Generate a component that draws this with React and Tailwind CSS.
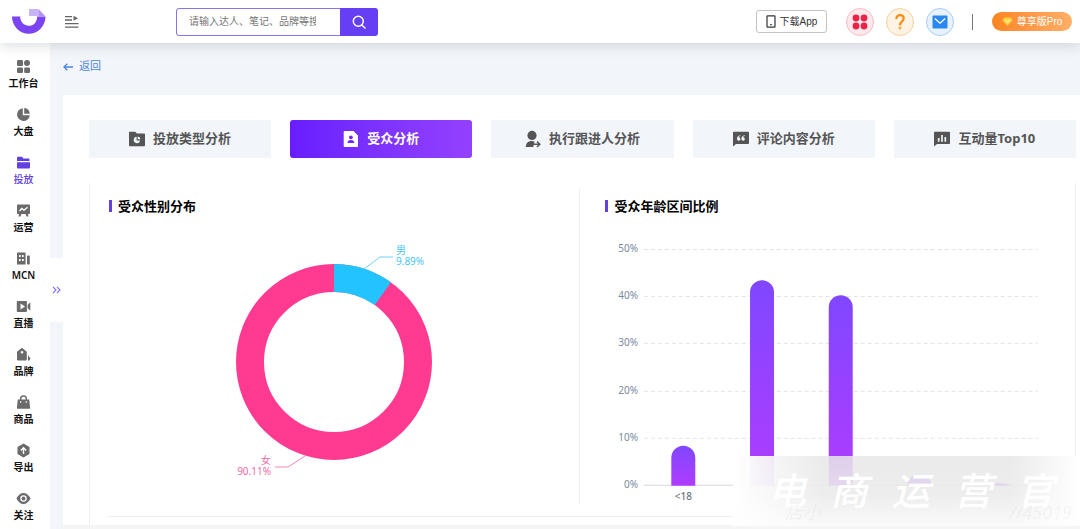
import React from "react";

const navItems = [
  {
    label: "工作台",
    icon: (
      <>
        <rect x="1" y="1" width="6" height="6" rx="1.2" />
        <circle cx="11" cy="4" r="3" />
        <rect x="1" y="8.5" width="6" height="5.5" rx="1.2" />
        <rect x="8.2" y="8.5" width="5.8" height="5.5" rx="1.2" />
      </>
    ),
  },
  {
    label: "大盘",
    icon: (
      <>
        <path d="M6.8 1.2A6.4 6.4 0 1 0 13.8 8.2H6.8Z" />
        <path d="M8.2 1A6.2 6.2 0 0 1 13.8 6.8H8.2Z" />
      </>
    ),
  },
  {
    label: "投放",
    active: true,
    icon: (
      <>
        <path d="M1 2.8a1 1 0 0 1 1-1h4l1.5 1.6H12.500a1 1 0 0 1 1 1V6H1Z" />
        <path d="M1 7.200H14V12.400a1 1 0 0 1-1 1H2a1 1 0 0 1-1-1Z" />
      </>
    ),
  },
  {
    label: "运营",
    icon: (
      <>
        <path d="M1.800 1.500h11.400a.8.8 0 0 1 .8.8v8a.8.8 0 0 1-.8.8H1.800a.8.8 0 0 1-.8-.8v-8a.8.8 0 0 1 .8-.8Z" />
        <path d="M3 11h2.500l-1 2.600H2.500ZM9.500 11H12l.5 2.600h-2Z" />
        <path d="M3.500 8l2.300-2.600 2.200 1.800L11.500 4.200" fill="none" stroke="#fff" strokeWidth="1.300" />
      </>
    ),
  },
  {
    label: "MCN",
    icon: (
      <>
        <path
          fillRule="evenodd"
          d="M1.800 1.500h7a.8.8 0 0 1 .8.8v11.200H1V2.300a.8.8 0 0 1 .8-.8ZM3 4v2h1.700V4Zm3 0v2h1.700V4ZM3 8v2h1.700V8Zm3 0v2h1.700V8Z"
        />
        <rect x="11" y="4.500" width="2.800" height="9" rx=".8" />
      </>
    ),
  },
  {
    label: "直播",
    icon: (
      <>
        <path fillRule="evenodd" d="M1.500 2h8.700a.7.7 0 0 1 .7.7v9.600a.7.7 0 0 1-.7.7H1.500a.7.7 0 0 1-.7-.7V2.700a.7.7 0 0 1 .7-.7ZM4.500 4.600v5.800L9 7.500Z" />
        <path d="M11.600 6l2.700-2.700v8.400L11.600 9Z" />
      </>
    ),
  },
  {
    label: "品牌",
    icon: (
      <>
        <path fillRule="evenodd" d="M6 .8l4.800 4V12.500a1 1 0 0 1-1 1H2a1 1 0 0 1-1-1V4.800ZM6 4a1.300 1.300 0 1 0 0 2.600A1.300 1.300 0 0 0 6 4Z" />
        <path d="M12 8l2.400 3.500-1 2H12Z" />
      </>
    ),
  },
  {
    label: "商品",
    icon: (
      <>
        <path d="M4.600 6V3.900a2.900 2.900 0 0 1 5.800 0V6" fill="none" stroke="currentColor" strokeWidth="1.400" />
        <path d="M1.800 4.500h11.400l.9 8.200a.9.9 0 0 1-.9 1H1.800a.9.9 0 0 1-.9-1Z" />
        <path d="M4.700 6.300v1.500M10.300 6.300v1.500" stroke="#fff" strokeWidth="1.200" />
      </>
    ),
  },
  {
    label: "导出",
    icon: (
      <>
        <path d="M7.500.6l6 3.400v7l-6 3.400-6-3.400V4Z" />
        <path d="M7.500 11V5M4.800 7.400l2.700-2.700 2.700 2.700" fill="none" stroke="#fff" strokeWidth="1.400" />
      </>
    ),
  },
  {
    label: "关注",
    icon: (
      <>
        <path d="M.4 7.500C2.200 4 4.700 2 7.500 2s5.300 2 7.100 5.500C12.800 11 10.300 13 7.500 13S2.200 11 .4 7.500Z" />
        <circle cx="7.500" cy="7.500" r="2.600" fill="none" stroke="#fff" strokeWidth="1.300" />
      </>
    ),
  },
];

const tabs = [
  {
    label: "投放类型分析",
    icon: (
      <>
        <path d="M0 1.500A.8.8 0 0 1 .8.700h5.400L8 2.600h7.200a.8.8 0 0 1 .8.8v11a.8.8 0 0 1-.8.800H.8a.8.8 0 0 1-.8-.8Z" />
        <path d="M7.600 5.800a3.200 3.200 0 1 0 3.500 3.600H7.600Z" fill="#f2f6fa" />
        <path d="M8.700 5.400a3 3 0 0 1 2.700 2.800H8.700Z" fill="#f2f6fa" />
      </>
    ),
  },
  {
    label: "受众分析",
    active: true,
    icon: (
      <>
        <path d="M1.500 0h9L15 4.500v10.700a.8.8 0 0 1-.8.800H1.500a.8.8 0 0 1-.8-.8V.8a.8.8 0 0 1 .8-.8Z" />
        <circle cx="7.900" cy="6.300" r="1.900" fill="#7425ff" />
        <path d="M4.500 12c0-2 1.300-3 3.400-3s3.400 1 3.400 3Z" fill="#7425ff" />
      </>
    ),
  },
  {
    label: "执行跟进人分析",
    icon: (
      <>
        <circle cx="7" cy="4.400" r="4.600" />
        <path d="M.8 16c0-4 2.500-6 6-6 1.200 0 2 .2 2.700.6L8.300 16Z" />
        <path d="M8.800 13.200h5.700M12 10.500l2.800 2.700L12 16" fill="none" stroke="currentColor" strokeWidth="1.500" />
      </>
    ),
  },
  {
    label: "评论内容分析",
    icon: (
      <>
        <path d="M.800.800h14.400a.8.8 0 0 1 .8.8v10.700a.8.8 0 0 1-.8.8H3L0 15.600v-14A.8.8 0 0 1 .8.800Z" />
        <path d="M7.300 4.300C5 4.600 4 6 4 8a1.700 1.700 0 1 0 1.600-1.700c.1-.7.700-1.200 1.700-1.300ZM11.700 4.300C9.400 4.600 8.400 6 8.400 8a1.700 1.700 0 1 0 1.600-1.700c.1-.7.700-1.200 1.700-1.300Z" fill="#f2f6fa" />
      </>
    ),
  },
  {
    label: "互动量Top10",
    icon: (
      <>
        <path d="M.800.800h14.400a.8.8 0 0 1 .8.8v10.700a.8.8 0 0 1-.8.8H3L0 15.600v-14A.8.8 0 0 1 .8.800Z" />
        <path d="M4.700 7v3.700M8 4v6.700M11.300 6v4.700" stroke="#f2f6fa" strokeWidth="1.700" />
      </>
    ),
  },
];

const ages = [
  { label: "<18", value: 8.5 },
  { label: "", value: 43.6 },
  { label: "", value: 40.4 },
  { label: "", value: 2.4 },
  { label: "", value: 0.6 },
];

function Header() {
  return (
    <header className="relative z-10 flex h-[43px] shrink-0 items-center bg-white pr-2 pl-3 shadow-[0_2px_14px_rgba(60,75,90,0.2)]">
      <svg width="34" height="26" viewBox="0 0 34 26" className="shrink-0" aria-hidden="true">
        <path d="M0 7.500H8.200C8.200 13 12 16.800 16.800 16.800C21.500 16.800 25 13.500 25.200 7.500H33.500A16.750 17.300 0 0 1 0 7.500Z" fill="#7b43f2" />
        <path d="M17 0H26.500V7H17Z" fill="#c9b3f7" />
        <path d="M26.500 0L33.500 7.500H26.500Z" fill="#b18ff5" />
      </svg>
      <button type="button" aria-label="折叠菜单" className="ml-[19px] text-[#666]">
        <svg width="14" height="14" viewBox="0 0 14 14" fill="none" stroke="currentColor" strokeWidth="1.300">
          <path d="M0 1.700H7M0 5H7M0 8.700H13.500M0 12.200H13.500" />
          <path d="M8.500.800L13 3.300L8.500 5.800Z" fill="currentColor" stroke="none" />
        </svg>
      </button>
      <form className="ml-[97px] flex h-7 w-[202px] overflow-hidden rounded-[3px]" onSubmit={(e) => e.preventDefault()}>
        <input
          type="text"
          aria-label="搜索"
          placeholder="请输入达人、笔记、品牌等搜索"
          className="min-w-0 flex-1 rounded-l-[3px] border border-r-0 border-[#8b72ee] bg-clip-padding pr-6 pl-3 text-[10px] outline-none placeholder:text-[#757575]"
        />
        <button type="submit" aria-label="搜索" className="flex w-[38px] items-center justify-center bg-[#643ff3] text-white">
          <svg width="14" height="14" viewBox="0 0 14 14" fill="none" stroke="currentColor" strokeWidth="1.500">
            <circle cx="6.300" cy="6.300" r="5" />
            <path d="M9.800 10L13 13" strokeLinecap="round" />
          </svg>
        </button>
      </form>
      <div className="ml-auto flex items-center">
        <button type="button" className="flex h-[23px] w-[71px] items-center justify-center gap-1 rounded-[3px] border border-[#c3c3c3] font-['Liberation_Sans','Noto_Sans_CJK_SC',sans-serif] text-[10px] text-[#333]">
          <svg width="10" height="13" viewBox="0 0 10 13" fill="none" stroke="currentColor" strokeWidth="1.200" aria-hidden="true">
            <rect x="1" y=".8" width="8" height="11.400" rx=".6" />
            <path d="M4.200 9.700h1.600" />
          </svg>
          下载App
        </button>
        <button type="button" aria-label="应用" className="ml-[19px] flex h-7 w-7 items-center justify-center rounded-full border border-[#f5bcc8] bg-[#ffe9ed]">
          <svg width="16" height="16" viewBox="0 0 16 16" fill="#f02147">
            <circle cx="4" cy="4" r="3.400" />
            <circle cx="12" cy="4" r="3.400" />
            <circle cx="4" cy="12" r="3.400" />
            <circle cx="12" cy="12" r="3.400" />
          </svg>
        </button>
        <button type="button" aria-label="帮助" className="ml-3 flex h-7 w-7 items-center justify-center rounded-full border border-[#f8cf9b] bg-[#fff3e4]">
          <svg width="10" height="16" viewBox="0 0 10 16" fill="none" stroke="#fb8c0c" strokeWidth="2.200">
            <path d="M1.300 5C1.300 2.500 2.800 1.200 5 1.200S8.700 2.600 8.700 4.600C8.700 7.300 5 7.500 5 11.200" />
            <circle cx="5" cy="14" r=".35" />
          </svg>
        </button>
        <button type="button" aria-label="消息" className="ml-3 flex h-7 w-7 items-center justify-center rounded-full border border-[#a9cdf5] bg-[#e7f2fe]">
          <svg width="16" height="14" viewBox="0 0 16 14">
            <rect x=".5" y=".5" width="15" height="13" rx="1" fill="#2987ef" />
            <path d="M2.800 3.500L8 8.200L13.200 3.500" fill="none" stroke="#fff" strokeWidth="1.300" />
          </svg>
        </button>
        <span className="ml-[18px] h-4 w-px bg-[#777]" />
        <a href="#pro" className="ml-[19px] flex h-[19px] w-20 items-center justify-center gap-1 rounded-full bg-gradient-to-r from-[#fb841f] to-[#ffae66] font-['Liberation_Sans','Noto_Sans_CJK_SC',sans-serif] text-[10px] text-white">
          <svg width="11" height="9" viewBox="0 0 11 9" aria-hidden="true">
            <path d="M2.500.500H8.500L10.800 3.300L5.500 8.700L.2 3.300Z" fill="#ffd23e" />
            <path d="M3.400 3.200L5.500 5.300L7.600 3.200" fill="none" stroke="#fff6c8" strokeWidth="1.100" />
          </svg>
          尊享版Pro
        </a>
      </div>
    </header>
  );
}

function Sidebar() {
  return (
    <nav className="relative flex w-[50px] shrink-0 flex-col gap-[6px] bg-white pt-[11px]">
      {navItems.map((item) => (
        <a
          key={item.label}
          href="#nav"
          className={`flex h-[42px] flex-col items-center justify-center gap-px pr-[3px] text-[10px] leading-4 ${item.active ? "font-medium text-[#6240e0]" : "font-semibold text-[#111]"}`}
        >
          <svg width="15" height="15" viewBox="0 0 15 15" fill="currentColor" aria-hidden="true" className={item.active ? "text-[#6240e0]" : "text-[#6b6b6b]"}>
            {item.icon}
          </svg>
          {item.label}
        </a>
      ))}
      <button type="button" aria-label="展开" className="absolute top-[215px] left-full flex h-16 w-[13px] items-center justify-center bg-white">
        <svg width="9" height="8" viewBox="0 0 9 8" fill="none" stroke="#8872e8" strokeWidth="1.200">
          <path d="M1 .800L4 4L1 7.200M5 .800L8 4L5 7.200" />
        </svg>
      </button>
    </nav>
  );
}

function Tabs() {
  return (
    <div role="tablist" className="grid grid-cols-5 gap-[19px]">
      {tabs.map((tab) => (
        <button
          key={tab.label}
          type="button"
          role="tab"
          aria-selected={Boolean(tab.active)}
          className={`flex h-[38px] items-center justify-center gap-2 text-[13px] font-bold whitespace-nowrap ${tab.active ? "rounded-[3px] bg-gradient-to-r from-[#681dff] to-[#9440ff] text-white" : "rounded-[1px] bg-[#f2f6fa] text-[#555]"}`}
        >
          <svg width="16" height="16" viewBox="0 0 16 16" fill="currentColor" aria-hidden="true" className="shrink-0 overflow-visible">
            {tab.icon}
          </svg>
          {tab.label}
        </button>
      ))}
    </div>
  );
}

function PanelTitle({ children }) {
  return (
    <h2 className="flex items-center gap-[6px] text-[13px] leading-5 font-bold text-black">
      <span className="h-3 w-[3px] bg-[#6142dc]" />
      {children}
    </h2>
  );
}

function GenderChart() {
  return (
    <svg viewBox="0 0 240 240" className="mx-auto mt-6 block w-[240px]" role="img" aria-label="受众性别分布">
      <circle cx="120" cy="122" r="84" fill="none" stroke="#ff3a90" strokeWidth="28" />
      <circle cx="120" cy="122" r="84" fill="none" stroke="#22c3ff" strokeWidth="28" pathLength="100" strokeDasharray="9.89 90.11" transform="rotate(-90 120 122)" />
      <path d="M150 29L166 17H179" fill="none" stroke="#6fd2f7" />
      <path d="M91 216L74 227H61" fill="none" stroke="#f788b6" />
      <g fontSize="10">
        <text x="182" y="14" fill="#4cc5f5">男</text>
        <text x="182" y="25" fill="#4cc5f5">9.89%</text>
        <text x="57" y="224" textAnchor="end" fill="#f56aa5">女</text>
        <text x="57" y="235" textAnchor="end" fill="#f56aa5">90.11%</text>
      </g>
    </svg>
  );
}

function AgeChart() {
  const left = 64;
  const right = 458;
  const base = 250;
  const unit = 4.72;
  const step = (right - left) / ages.length;
  return (
    <svg viewBox="0 0 495 268" className="mt-5 block w-full" role="img" aria-label="受众年龄区间比例">
      <defs>
        <linearGradient id="bar" x1="0" y1="0" x2="0" y2="1">
          <stop offset="0" stopColor="#8047ff" />
          <stop offset="1" stopColor="#b03cff" />
        </linearGradient>
      </defs>
      {[50, 40, 30, 20, 10, 0].map((tick) => {
        const y = Math.round(base - tick * unit) - 0.5;
        return (
          <g key={tick}>
            <path d={`M${left} ${y}H${right}`} stroke={tick ? "#e2e4e9" : "#d3d7df"} strokeDasharray={tick ? "4 3" : "none"} />
            <text x={left - 6} y={y + 3} textAnchor="end" fontSize="10" fill="#7a8a9e">{tick}%</text>
          </g>
        );
      })}
      {ages.map((age, i) => {
        const x = left + step * (i + 0.5);
        const h = age.value * unit;
        const r = Math.min(12, h);
        const top = base - h;
        return (
          <g key={i}>
            <path d={`M${x - 12} ${base}V${top + r}A12 ${r} 0 0 1 ${x + 12} ${top + r}V${base}Z`} fill="url(#bar)" />
            {age.label && (
              <text x={x} y={base + 14} textAnchor="middle" fontSize="10" fontWeight="500" fill="#6f7480">{age.label}</text>
            )}
          </g>
        );
      })}
    </svg>
  );
}

function Watermark() {
  return (
    <div className="pointer-events-none absolute right-0 bottom-[3px] h-[70px] w-[347px] overflow-hidden bg-[linear-gradient(to_right,#ffffff_0%,rgba(255,255,255,0)_26%,rgba(255,255,255,0)_80%,#ffffff_100%),linear-gradient(to_bottom,rgba(231,231,232,0.86),rgba(235,235,236,0.9)_55%,#fafafa_100%)]">
      <div className="flex justify-between pt-1 pr-[26px] pl-[35px] text-[38px] leading-[60px] font-medium text-white italic">
        {"电商运营官".split("").map((char) => (
          <span key={char}>{char}</span>
        ))}
      </div>
      <div className="absolute right-0 bottom-0 left-[52px] flex justify-between pr-2 text-[18px] leading-7 text-black/5 italic">
        <span>店小</span>
        <span>//45019</span>
      </div>
    </div>
  );
}

export default function App() {
  return (
    <div className="relative flex min-h-screen flex-col bg-[#f2f5f9] font-['Noto_Sans','Noto_Sans_CJK_SC',sans-serif]">
      <Header />
      <div className="flex flex-1">
        <Sidebar />
        <main className="flex min-w-0 flex-1 flex-col pl-[13px]">
          <a href="#back" className="flex h-[52px] items-center gap-[6px] pb-[5px] text-[11px] text-[#4a86e0]">
            <svg width="10" height="8" viewBox="0 0 10 8" fill="none" stroke="currentColor" strokeWidth="1.300" aria-hidden="true">
              <path d="M10 4H1M4.300 .700L1 4L4.300 7.300" />
            </svg>
            返回
          </a>
          <section className="flex flex-1 flex-col rounded-tl-[3px] bg-white pt-[25px] pr-1 pl-[26px]">
            <Tabs />
            <div className="mt-[25px] flex-1 border-x border-[#eeeff2] pb-[5px] pl-[17px]">
              <div className="grid grid-cols-[473fr_494fr] border-b border-[#eeeff2] pt-[5px] pb-3">
                <div className="border-r border-[#eeeff2] pt-2 pl-0.5">
                  <PanelTitle>受众性别分布</PanelTitle>
                  <div className="pr-5">
                    <GenderChart />
                  </div>
                </div>
                <div className="pt-2">
                  <div className="pl-[25px]">
                    <PanelTitle>受众年龄区间比例</PanelTitle>
                  </div>
                  <AgeChart />
                </div>
              </div>
            </div>
          </section>
          <div className="h-1 shrink-0 bg-[#f5f5f6]" />
        </main>
      </div>
      <Watermark />
    </div>
  );
}
